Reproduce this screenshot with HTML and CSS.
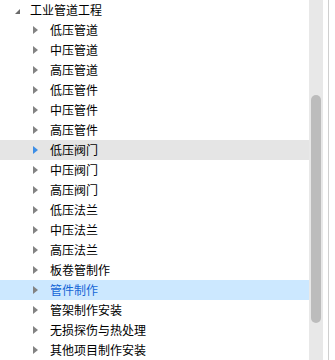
FILE: index.html
```html
<!DOCTYPE html>
<html>
<head>
<meta charset="utf-8">
<link rel="stylesheet" href="styles.css">
</head>
<body>
<div class="frame">
  <div class="tree">
    <div class="row root"><span class="exp"></span><span class="label">工业管道工程</span></div>
    <div class="row child"><span class="arrow"></span><span class="label">低压管道</span></div>
    <div class="row child"><span class="arrow"></span><span class="label">中压管道</span></div>
    <div class="row child"><span class="arrow"></span><span class="label">高压管道</span></div>
    <div class="row child"><span class="arrow"></span><span class="label">低压管件</span></div>
    <div class="row child"><span class="arrow"></span><span class="label">中压管件</span></div>
    <div class="row child"><span class="arrow"></span><span class="label">高压管件</span></div>
    <div class="row child hover"><span class="arrow"></span><span class="label">低压阀门</span></div>
    <div class="row child"><span class="arrow"></span><span class="label">中压阀门</span></div>
    <div class="row child"><span class="arrow"></span><span class="label">高压阀门</span></div>
    <div class="row child"><span class="arrow"></span><span class="label">低压法兰</span></div>
    <div class="row child"><span class="arrow"></span><span class="label">中压法兰</span></div>
    <div class="row child"><span class="arrow"></span><span class="label">高压法兰</span></div>
    <div class="row child"><span class="arrow"></span><span class="label">板卷管制作</span></div>
    <div class="row child selected"><span class="arrow"></span><span class="label">管件制作</span></div>
    <div class="row child"><span class="arrow"></span><span class="label">管架制作安装</span></div>
    <div class="row child"><span class="arrow"></span><span class="label">无损探伤与热处理</span></div>
    <div class="row child"><span class="arrow"></span><span class="label">其他项目制作安装</span></div>
  </div>
  <div class="scrollbar"><div class="thumb"></div></div>
  <div class="edge"></div>
</div>
</body>
</html>
```
FILE: styles.css
```css
html, body {
  margin: 0;
  padding: 0;
  background: #ffffff;
}
.frame {
  display: flex;
  width: 335px;
  height: 360px;
  overflow: hidden;
}
.tree {
  width: 309px;
  flex: none;
  display: flex;
  flex-direction: column;
}
.row {
  height: 20px;
  flex: none;
  display: flex;
  align-items: center;
  font-family: "Noto Sans CJK SC", sans-serif;
  font-size: 12px;
  color: #000000;
  white-space: nowrap;
}
.row .label {
  line-height: 20px;
}
.root {
  padding-left: 15px;
}
.exp {
  width: 0;
  height: 0;
  border-left: 5px solid transparent;
  border-bottom: 5px solid #6b6b6b;
  margin-right: 10px;
  margin-top: 2px;
}
.child {
  padding-left: 33px;
}
.arrow {
  width: 0;
  height: 0;
  border-top: 4px solid transparent;
  border-bottom: 4px solid transparent;
  border-left: 5px solid #838383;
  margin-right: 12px;
}
.hover {
  background: #e5e5e5;
}
.hover .arrow {
  border-left-color: #3d8ee6;
}
.selected {
  background: #cce8ff;
}
.selected .label {
  color: #1566d6;
}
.scrollbar {
  width: 14px;
  flex: none;
  background: #e8e8e8;
  display: flex;
  flex-direction: column;
  align-items: center;
  padding-top: 95px;
  box-sizing: border-box;
}
.thumb {
  width: 10px;
  height: 228px;
  background: #bcbcbc;
  border-radius: 5px;
}
.edge {
  width: 1px;
  margin-left: 5px;
  background: #cfcfcf;
  flex: none;
}
```
